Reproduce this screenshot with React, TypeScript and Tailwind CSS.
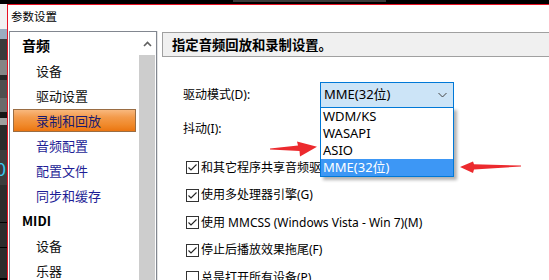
import React from "react";

const sidebarItems = [
  { label: "音频", kind: "head" },
  { label: "设备", kind: "item" },
  { label: "驱动设置", kind: "item" },
  { label: "录制和回放", kind: "selected" },
  { label: "音频配置", kind: "blue" },
  { label: "配置文件", kind: "blue" },
  { label: "同步和缓存", kind: "blue" },
  { label: "MIDI", kind: "head" },
  { label: "设备", kind: "item" },
  { label: "乐器", kind: "item" },
];

const options = ["WDM/KS", "WASAPI", "ASIO", "MME(32位)"];

const checks = [
  { label: "和其它程序共享音频驱动(S)", on: true },
  { label: "使用多处理器引擎(G)", on: true },
  { label: "使用 MMCSS (Windows Vista - Win 7)(M)", on: true },
  { label: "停止后播放效果拖尾(F)", on: true },
  { label: "总是打开所有设备(P)", on: false },
];

function DawStrip() {
  return (
    <div className="w-[7px] flex flex-col overflow-hidden">
      <div className="h-[25px] bg-[#f2f2f2]" />
      <div className="h-[10px] bg-[#9badc0]" />
      <div className="h-[21px] bg-[#3b3b3b]" />
      <div className="h-[15px] bg-[#858585]" />
      <div className="h-[5px] bg-[#262626]" />
      <div className="h-[18px] bg-[#4f4f4f]" />
      <div className="h-[14px] bg-[#6b6b6b]" />
      <div className="h-[6px] bg-[#151515]" />
      <div className="h-[7px] bg-[#a0a0a0]" />
      <div className="h-[25px] bg-[#2a2a2a]" />
      <div className="h-[35px] bg-[#3c3c3c] flex items-center overflow-hidden">
        <span className="-ml-[4px] text-[18px] leading-none text-[#3ac8f0]">0</span>
      </div>
      <div className="h-[38px] bg-[#2c2c2c] border-b border-black" />
      <div className="h-[25px] bg-[#2c2c2c] border-b border-black" />
      <div className="h-[30px] bg-[#2c2c2c]" />
    </div>
  );
}

function Sidebar() {
  return (
    <div className="w-[148px] flex border-l border-t border-r border-[#828790] pr-[1px]">
      <div className="w-[129px] pt-[1px] text-[13px]">
        {sidebarItems.map((it, i) => {
          if (it.kind === "head")
            return (
              <div
                key={i}
                className={`h-[25px] flex items-center pl-[12px] font-bold text-black ${it.label === "MIDI" ? "text-[13px]" : "text-[14px]"}`}
              >
                {it.label}
              </div>
            );
          if (it.kind === "selected")
            return (
              <div key={i} className="h-[25px] py-[1px] pl-[3px]">
                <div className="h-full w-[123px] flex items-center pl-[22px] border border-[#9a6d43] bg-[linear-gradient(to_bottom,#f8b87e,#f39a4a_35%,#f08a2c_70%,#eb7510)] text-[#1a1a6e]">
                  {it.label}
                </div>
              </div>
            );
          return (
            <div
              key={i}
              className={`h-[25px] flex items-center pl-[26px] ${it.kind === "blue" ? "text-[#1e1e96]" : "text-[#111]"}`}
            >
              {it.label}
            </div>
          );
        })}
      </div>
      <div className="w-[16px] flex flex-col">
        <div className="h-[23px] bg-white flex items-center justify-center">
          <svg width="9" height="6" viewBox="0 0 9 6">
            <path d="M1 5 L4.5 1.5 L8 5" fill="none" stroke="#606060" strokeWidth="1.6" />
          </svg>
        </div>
        <div className="flex-1 bg-[#cdcdcd]" />
      </div>
    </div>
  );
}

function Checkbox({ on }: { on: boolean }) {
  return (
    <div className="w-[13px] h-[13px] border border-[#333] bg-white flex items-center justify-center">
      {on && (
        <svg width="11" height="11" viewBox="0 0 11 11">
          <path d="M1.5 5.5 L4 8 L9.5 2.5" fill="none" stroke="#222" strokeWidth="1.1" />
        </svg>
      )}
    </div>
  );
}

function Main() {
  return (
    <div className="flex-1 min-w-0 border-l border-[#e3e3e3] pl-[4px] pt-[1px]">
      <div className="w-[400px] h-[25px] border border-[#a0a0a0] bg-[#f0f0f0] flex items-center pl-[9px] text-[13.33px] font-bold text-black">
        指定音频回放和录制设置。
      </div>
      <div className="pl-[21px] mt-[25px] text-[12px] text-black font-['Noto_Sans','Noto_Sans_CJK_SC',sans-serif]">
        <div className="flex h-[26px] items-center">
          <div className="w-[137px]">驱动模式(D):</div>
          <div className="relative w-[134px] h-[26px] border border-[#0078d7] bg-[#cce4f7] flex items-center pl-[3px] text-[13px]">
            MME(32位)
            <svg className="ml-auto mr-[6px]" width="9" height="6" viewBox="0 0 9 6">
              <path d="M0.5 1 L4.5 5 L8.5 1" fill="none" stroke="#444" strokeWidth="1" />
            </svg>
            <div className="absolute left-[-1px] top-[24px] w-[134px] bg-white border border-[#0078d7] shadow-[3px_3px_3px_rgba(0,0,0,0.3)] z-10">
              {options.map((o, i) => (
                <div
                  key={o}
                  className={`h-[17px] leading-[17px] pl-[2px] text-[13px] ${i === 3 ? "bg-[#3d97f5] text-white" : "text-black"}`}
                >
                  {o}
                </div>
              ))}
            </div>
          </div>
        </div>
        <div className="flex h-[26px] items-center mt-[8px]">
          <div className="w-[137px]">抖动(I):</div>
        </div>
        <div className="mt-[12px] flex flex-col">
          {checks.map((c) => (
            <div key={c.label} className="h-[27.5px] flex items-center gap-[2px] pl-[3px] whitespace-nowrap">
              <Checkbox on={c.on} />
              <span>{c.label}</span>
            </div>
          ))}
        </div>
      </div>
    </div>
  );
}

function Arrows() {
  return (
    <svg className="absolute left-0 top-0 pointer-events-none z-20" width="549" height="280" viewBox="0 0 549 280">
      <polygon
        points="270,148.6 298,145.6 297,141.5 317,146.8 300,156.5 299.5,151 270,149.6"
        fill="#ec2a2e"
      />
      <polygon
        points="521,165.6 474,164.2 473,161.5 460,167 473,173 474,169.5 521,166.4"
        fill="#ec2a2e"
      />
    </svg>
  );
}

export default function App() {
  return (
    <div className="relative w-[549px] h-[280px] overflow-hidden bg-black font-['Noto_Sans_CJK_SC',sans-serif] text-black">
      <div className="h-[4px] flex">
        <div className="ml-[233px] w-[153px] h-[2px] bg-[#3a3a3a]" />
      </div>
      <div className="flex h-[276px]">
        <DawStrip />
        <div className="flex-1 min-w-0 flex flex-col bg-white border-l border-t border-[#e81123]">
          <div className="h-[26px] pl-[3px] pt-[3px] text-[11.5px] leading-[16px]">参数设置</div>
          <div className="flex flex-1 min-h-0 pl-[1px]">
            <Sidebar />
            <Main />
          </div>
        </div>
      </div>
      <Arrows />
    </div>
  );
}
